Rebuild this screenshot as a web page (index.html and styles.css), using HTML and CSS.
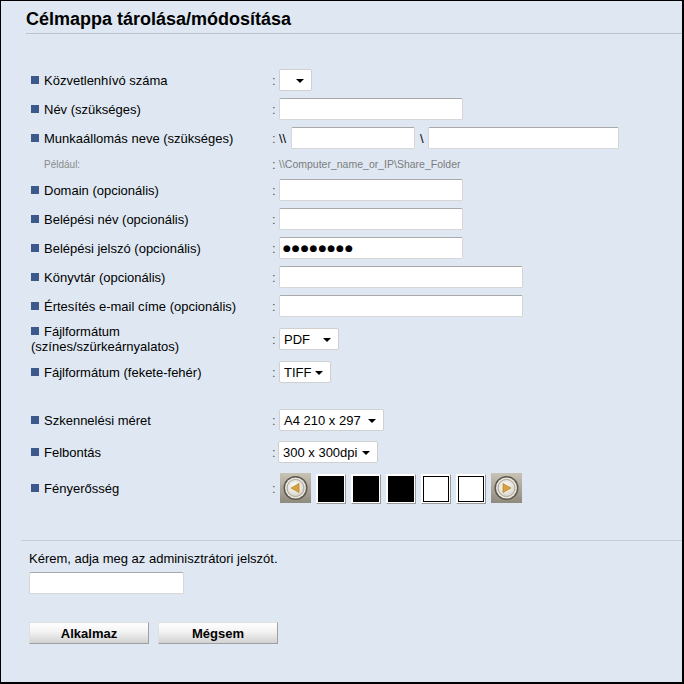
FILE: index.html
```html
<!DOCTYPE html>
<html lang="hu">
<head>
  <meta charset="UTF-8">
  <title>Célmappa tárolása/módosítása</title>
  <link rel="stylesheet" href="styles.css">
</head>
<body>
  <div id="page">
    <h1 class="title">Célmappa tárolása/módosítása</h1>

    <div id="form">
      <div class="row">
        <div class="label"><span class="bullet"></span>Közvetlenhívó száma</div>
        <div class="colon">:</div>
        <div class="select w32"><span class="val"></span><span class="arrow"></span></div>
      </div>
      <div class="row">
        <div class="label"><span class="bullet"></span>Név (szükséges)</div>
        <div class="colon">:</div>
        <input class="text w184" type="text">
      </div>
      <div class="row">
        <div class="label"><span class="bullet"></span>Munkaállomás neve (szükséges)</div>
        <div class="colon">:</div>
        <span class="slash">\\</span>
        <input class="text w124" type="text">
        <span class="slash sep">\</span>
        <input class="text w191" type="text">
      </div>
      <div class="row hint">
        <div class="label small">Például:</div>
        <div class="colon">:</div>
        <div class="example">\\Computer_name_or_IP\Share_Folder</div>
      </div>
      <div class="row">
        <div class="label"><span class="bullet"></span>Domain (opcionális)</div>
        <div class="colon">:</div>
        <input class="text w184" type="text">
      </div>
      <div class="row">
        <div class="label"><span class="bullet"></span>Belépési név (opcionális)</div>
        <div class="colon">:</div>
        <input class="text w184" type="text">
      </div>
      <div class="row">
        <div class="label"><span class="bullet"></span>Belépési jelszó (opcionális)</div>
        <div class="colon">:</div>
        <input class="text w184 pass" type="text" value="●●●●●●●●">
      </div>
      <div class="row">
        <div class="label"><span class="bullet"></span>Könyvtár (opcionális)</div>
        <div class="colon">:</div>
        <input class="text w244" type="text">
      </div>
      <div class="row">
        <div class="label"><span class="bullet"></span>Értesítés e-mail címe (opcionális)</div>
        <div class="colon">:</div>
        <input class="text w244" type="text">
      </div>
      <div class="row tall">
        <div class="label"><span><span class="bullet"></span>Fájlformátum<br>(színes/szürkeárnyalatos)</span></div>
        <div class="colon">:</div>
        <div class="select w60"><span class="val">PDF</span><span class="arrow"></span></div>
      </div>
      <div class="row spaced">
        <div class="label"><span class="bullet"></span>Fájlformátum (fekete-fehér)</div>
        <div class="colon">:</div>
        <div class="select w52"><span class="val">TIFF</span><span class="arrow"></span></div>
      </div>
      <div class="row loose">
        <div class="label"><span class="bullet"></span>Szkennelési méret</div>
        <div class="colon">:</div>
        <div class="select w105"><span class="val">A4 210 x 297</span><span class="arrow"></span></div>
      </div>
      <div class="row loose">
        <div class="label"><span class="bullet"></span>Felbontás</div>
        <div class="colon">:</div>
        <div class="select w100 shift"><span class="val">300 x 300dpi</span><span class="arrow"></span></div>
      </div>
      <div class="row tall">
        <div class="label"><span class="bullet"></span>Fényerősség</div>
        <div class="colon">:</div>
        <div class="brightness">
          <svg class="knob" width="31" height="30" viewBox="0 0 31 30">
            <defs>
              <linearGradient id="kbg" x1="0" y1="0" x2="0" y2="1">
                <stop offset="0" stop-color="#c9c3b5"/>
                <stop offset="1" stop-color="#8f8a7e"/>
              </linearGradient>
              <radialGradient id="kin" cx="0.45" cy="0.4" r="0.6">
                <stop offset="0" stop-color="#ffffff"/>
                <stop offset="1" stop-color="#d8d4ca"/>
              </radialGradient>
            </defs>
            <rect width="31" height="30" fill="url(#kbg)"/>
            <circle cx="15.5" cy="15" r="12" fill="#5c574d"/>
            <circle cx="15.5" cy="15" r="10.5" fill="#e9e6de"/>
            <circle cx="15.5" cy="15" r="8.5" fill="url(#kin)" stroke="#9b968a" stroke-width="0.8"/>
            <polygon points="11,15 19,10.5 19,19.5" fill="#d9a23a" stroke="#a8741c" stroke-width="0.6"/>
          </svg>
          <span class="level on"></span>
          <span class="level on"></span>
          <span class="level on"></span>
          <span class="level"></span>
          <span class="level"></span>
          <svg class="knob" width="31" height="30" viewBox="0 0 31 30">
            <rect width="31" height="30" fill="url(#kbg)"/>
            <circle cx="15.5" cy="15" r="12" fill="#5c574d"/>
            <circle cx="15.5" cy="15" r="10.5" fill="#e9e6de"/>
            <circle cx="15.5" cy="15" r="8.5" fill="url(#kin)" stroke="#9b968a" stroke-width="0.8"/>
            <polygon points="20,15 12,10.5 12,19.5" fill="#d9a23a" stroke="#a8741c" stroke-width="0.6"/>
          </svg>
        </div>
      </div>
    </div>

    <div id="admin">
      <p>Kérem, adja meg az adminisztrátori jelszót.</p>
      <input class="text admin-pass" type="password">
    </div>

    <div id="buttons">
      <button class="btn">Alkalmaz</button>
      <button class="btn">Mégsem</button>
    </div>
  </div>
</body>
</html>
```

FILE: styles.css
```css
* {
  box-sizing: border-box;
  margin: 0;
  padding: 0;
}

body {
  font-family: "Liberation Sans", Arial, sans-serif;
  font-size: 13px;
  color: #000;
  background: #dfe8f2;
}

#page {
  width: 684px;
  height: 684px;
  border: 1px solid #000;
  border-right-width: 2px;
  border-bottom-width: 2px;
  background: #dfe8f2;
}

/* Header */
.title {
  margin-left: 25px;
  padding-top: 7px;
  height: 33px;
  font-size: 18px;
  line-height: 22px;
  font-weight: bold;
  border-bottom: 1px solid #b7c3cf;
}

/* Form rows */
#form {
  padding: 35px 0 0 30px;
}

.row {
  display: flex;
  align-items: center;
  height: 22px;
  margin-bottom: 7px;
}

.row.hint {
  height: 16px;
}

.row.tall {
  height: 30px;
}

.row.spaced {
  margin-bottom: 26px;
}

.row.loose {
  margin-bottom: 10px;
}

.label {
  width: 241px;
  display: flex;
  align-items: center;
  line-height: 15px;
}

.bullet {
  display: inline-block;
  width: 8px;
  height: 8px;
  background: #3b5a8b;
  margin-right: 5px;
  vertical-align: 1px;
}

.label.small {
  padding-left: 13px;
  font-size: 10px;
  color: #8a8a8a;
}

.colon {
  width: 7px;
  color: #555;
}

.slash {
  width: 12px;
}

.slash.sep {
  width: 13px;
  padding-left: 5px;
}

.example {
  font-size: 10.5px;
  color: #7c7c7c;
}

/* Inputs */
input.text {
  height: 22px;
  background: #fff;
  border: 1px solid #d6d6d6;
  border-top-color: #a9a9a9;
  border-radius: 2px;
  font-family: "Liberation Sans", Arial, sans-serif;
  font-size: 13px;
  padding: 0 3px;
}

input.pass {
  font-family: "DejaVu Sans", sans-serif;
  font-size: 9px;
  letter-spacing: 1px;
  padding-left: 3px;
}

.w124 { width: 124px; }
.w184 { width: 184px; }
.w191 { width: 191px; }
.w244 { width: 244px; }

/* Selects */
.select {
  height: 22px;
  display: flex;
  align-items: center;
  justify-content: space-between;
  background: #fff;
  border: 1px solid #d0d0d0;
  border-radius: 2px;
  padding: 0 7px 0 4px;
}

.select .val {
  font-size: 13px;
}

.select .arrow {
  width: 0;
  height: 0;
  border-left: 4px solid transparent;
  border-right: 4px solid transparent;
  border-top: 4px solid #000;
  margin-top: 2px;
}

.select.shift {
  margin-left: -1px;
}

.w32 { width: 33px; }
.w52 { width: 52px; }
.w60 { width: 60px; }
.w100 { width: 100px; }
.w105 { width: 105px; }

/* Brightness */
.brightness {
  display: flex;
  align-items: center;
  gap: 5px;
  margin-left: 1px;
}

.knob {
  display: block;
}

.level {
  width: 30px;
  height: 30px;
  background: #fff;
  border: 1px solid #fff;
  border-right-color: #9a9a9a;
  border-bottom-color: #9a9a9a;
  position: relative;
  margin-top: 2px;
}

.level::after {
  content: "";
  position: absolute;
  left: 1px;
  top: 1px;
  right: 1px;
  bottom: 1px;
  border: 1px solid #000;
  background: #fff;
}

.level.on::after {
  background: #000;
}

/* Admin password */
#admin {
  margin: 37px 0 0 20px;
  border-top: 1px solid #c3cdd8;
  padding: 10px 0 0 8px;
}

#admin p {
  line-height: 16px;
  margin-bottom: 5px;
}

.admin-pass {
  width: 155px;
  height: 21px;
  border-color: #fff;
}

/* Buttons */
#buttons {
  margin: 28px 0 0 28px;
  display: flex;
  gap: 9px;
}

.btn {
  width: 120px;
  height: 22px;
  font-family: "Liberation Sans", Arial, sans-serif;
  font-size: 13px;
  font-weight: bold;
  background: linear-gradient(#ffffff, #f2f2f2 45%, #d2d2d2);
  border: 1px solid #a0a0a0;
  border-top-color: #e0e0e0;
  border-left-color: #e0e0e0;
  border-radius: 0;
  color: #000;
}
```
